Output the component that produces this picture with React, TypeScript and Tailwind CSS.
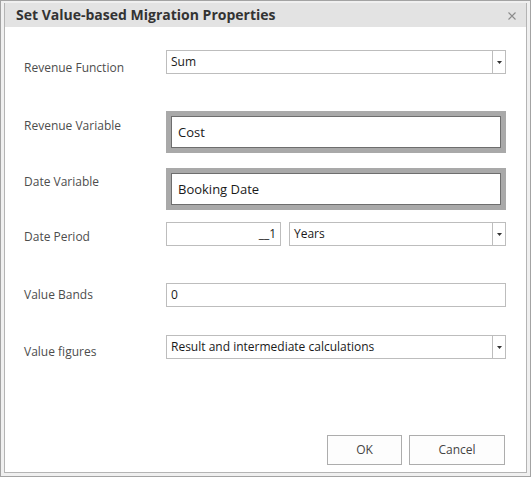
import React from 'react';

const font = { fontFamily: '"Open Sans", "Noto Sans", Arial, sans-serif' };

function Arrow() {
  return (
    <div className="w-[13px] h-full border-l border-[#bdbdbd] flex items-center justify-center">
      <svg width="5" height="3" viewBox="0 0 5 3">
        <path d="M0 0h5L2.5 3z" fill="#333" />
      </svg>
    </div>
  );
}

function Select({ value, className = '' }: { value: string; className?: string }) {
  return (
    <div className={`flex h-[24px] border border-[#bdbdbd] bg-white ${className}`}>
      <div className="flex-1 pl-[4px] text-[12px] leading-[22px] text-[#1a1a1a]">{value}</div>
      <Arrow />
    </div>
  );
}

function ThickInput({ value }: { value: string }) {
  return (
    <div className="h-[42px] w-[340px] border-[5px] border-[#a9a9a9]">
      <div className="h-full border border-[#6e6e6e] bg-white pl-[6px] text-[13px] leading-[30px] text-[#1a1a1a]">
        {value}
      </div>
    </div>
  );
}

function Row({
  label,
  labelTop,
  className = '',
  children,
}: {
  label: string;
  labelTop: string;
  className?: string;
  children: React.ReactNode;
}) {
  return (
    <div className={`flex items-start ${className}`}>
      <div className={`w-[161px] pl-[19px] text-[12px] leading-[16px] text-[#4d4d4d] ${labelTop}`}>{label}</div>
      {children}
    </div>
  );
}

export default function App() {
  return (
    <div
      style={font}
      className="w-[531px] h-[477px] border border-[#a3a3a3] bg-[#f0f0f0] pt-[2px] px-[3px] pb-[3px]"
    >
      <div className="h-full flex flex-col border-x border-b border-[#b4b4b4] bg-white">
        {/* Title bar */}
        <div className="h-[24px] bg-[#e3e3e3] flex items-center justify-between pl-[11px] pr-[10px]">
          <span className="text-[14px] font-bold text-[#333] leading-[24px]">Set Value-based Migration Properties</span>
          <svg width="8" height="8" viewBox="0 0 8 8" className="mt-[1px]">
            <path d="M0.5 0.5l7 7M7.5 0.5l-7 7" stroke="#8c8c8c" strokeWidth="1.1" />
          </svg>
        </div>

        <div className="flex-1 flex flex-col">
          <Row label="Revenue Function" labelTop="mt-[10px]" className="mt-[23px] h-[24px]">
            <Select value="Sum" className="w-[340px]" />
          </Row>

          <Row label="Revenue Variable" labelTop="mt-[7px]" className="mt-[37px] h-[42px]">
            <ThickInput value="Cost" />
          </Row>

          <Row label="Date Variable" labelTop="mt-[6px]" className="mt-[15px] h-[42px]">
            <ThickInput value="Booking Date" />
          </Row>

          <Row label="Date Period" labelTop="mt-[7px]" className="mt-[12px] h-[24px]">
            <div className="flex gap-[8px]">
              <div className="w-[115px] h-[24px] border border-[#bdbdbd] bg-white pr-[4px] text-right text-[12px] leading-[22px] text-[#1a1a1a]">
                __1
              </div>
              <Select value="Years" className="w-[217px]" />
            </div>
          </Row>

          <Row label="Value Bands" labelTop="mt-[4px]" className="mt-[37px] h-[24px]">
            <div className="w-[340px] h-[24px] border border-[#bdbdbd] bg-white pl-[4px] text-[12px] leading-[22px] text-[#1a1a1a]">
              0
            </div>
          </Row>

          <Row label="Value figures" labelTop="mt-[9px]" className="mt-[28px] h-[24px]">
            <Select value="Result and intermediate calculations" className="w-[340px]" />
          </Row>

          <div className="mt-auto flex justify-end gap-[7px] pr-[21px] pb-[7px]">
            <button className="w-[75px] h-[30px] border border-[#adadad] bg-[#fdfdfd] text-[12px] text-[#444]">OK</button>
            <button className="w-[96px] h-[30px] border border-[#adadad] bg-[#fdfdfd] text-[12px] text-[#444]">Cancel</button>
          </div>
        </div>
      </div>
    </div>
  );
}
